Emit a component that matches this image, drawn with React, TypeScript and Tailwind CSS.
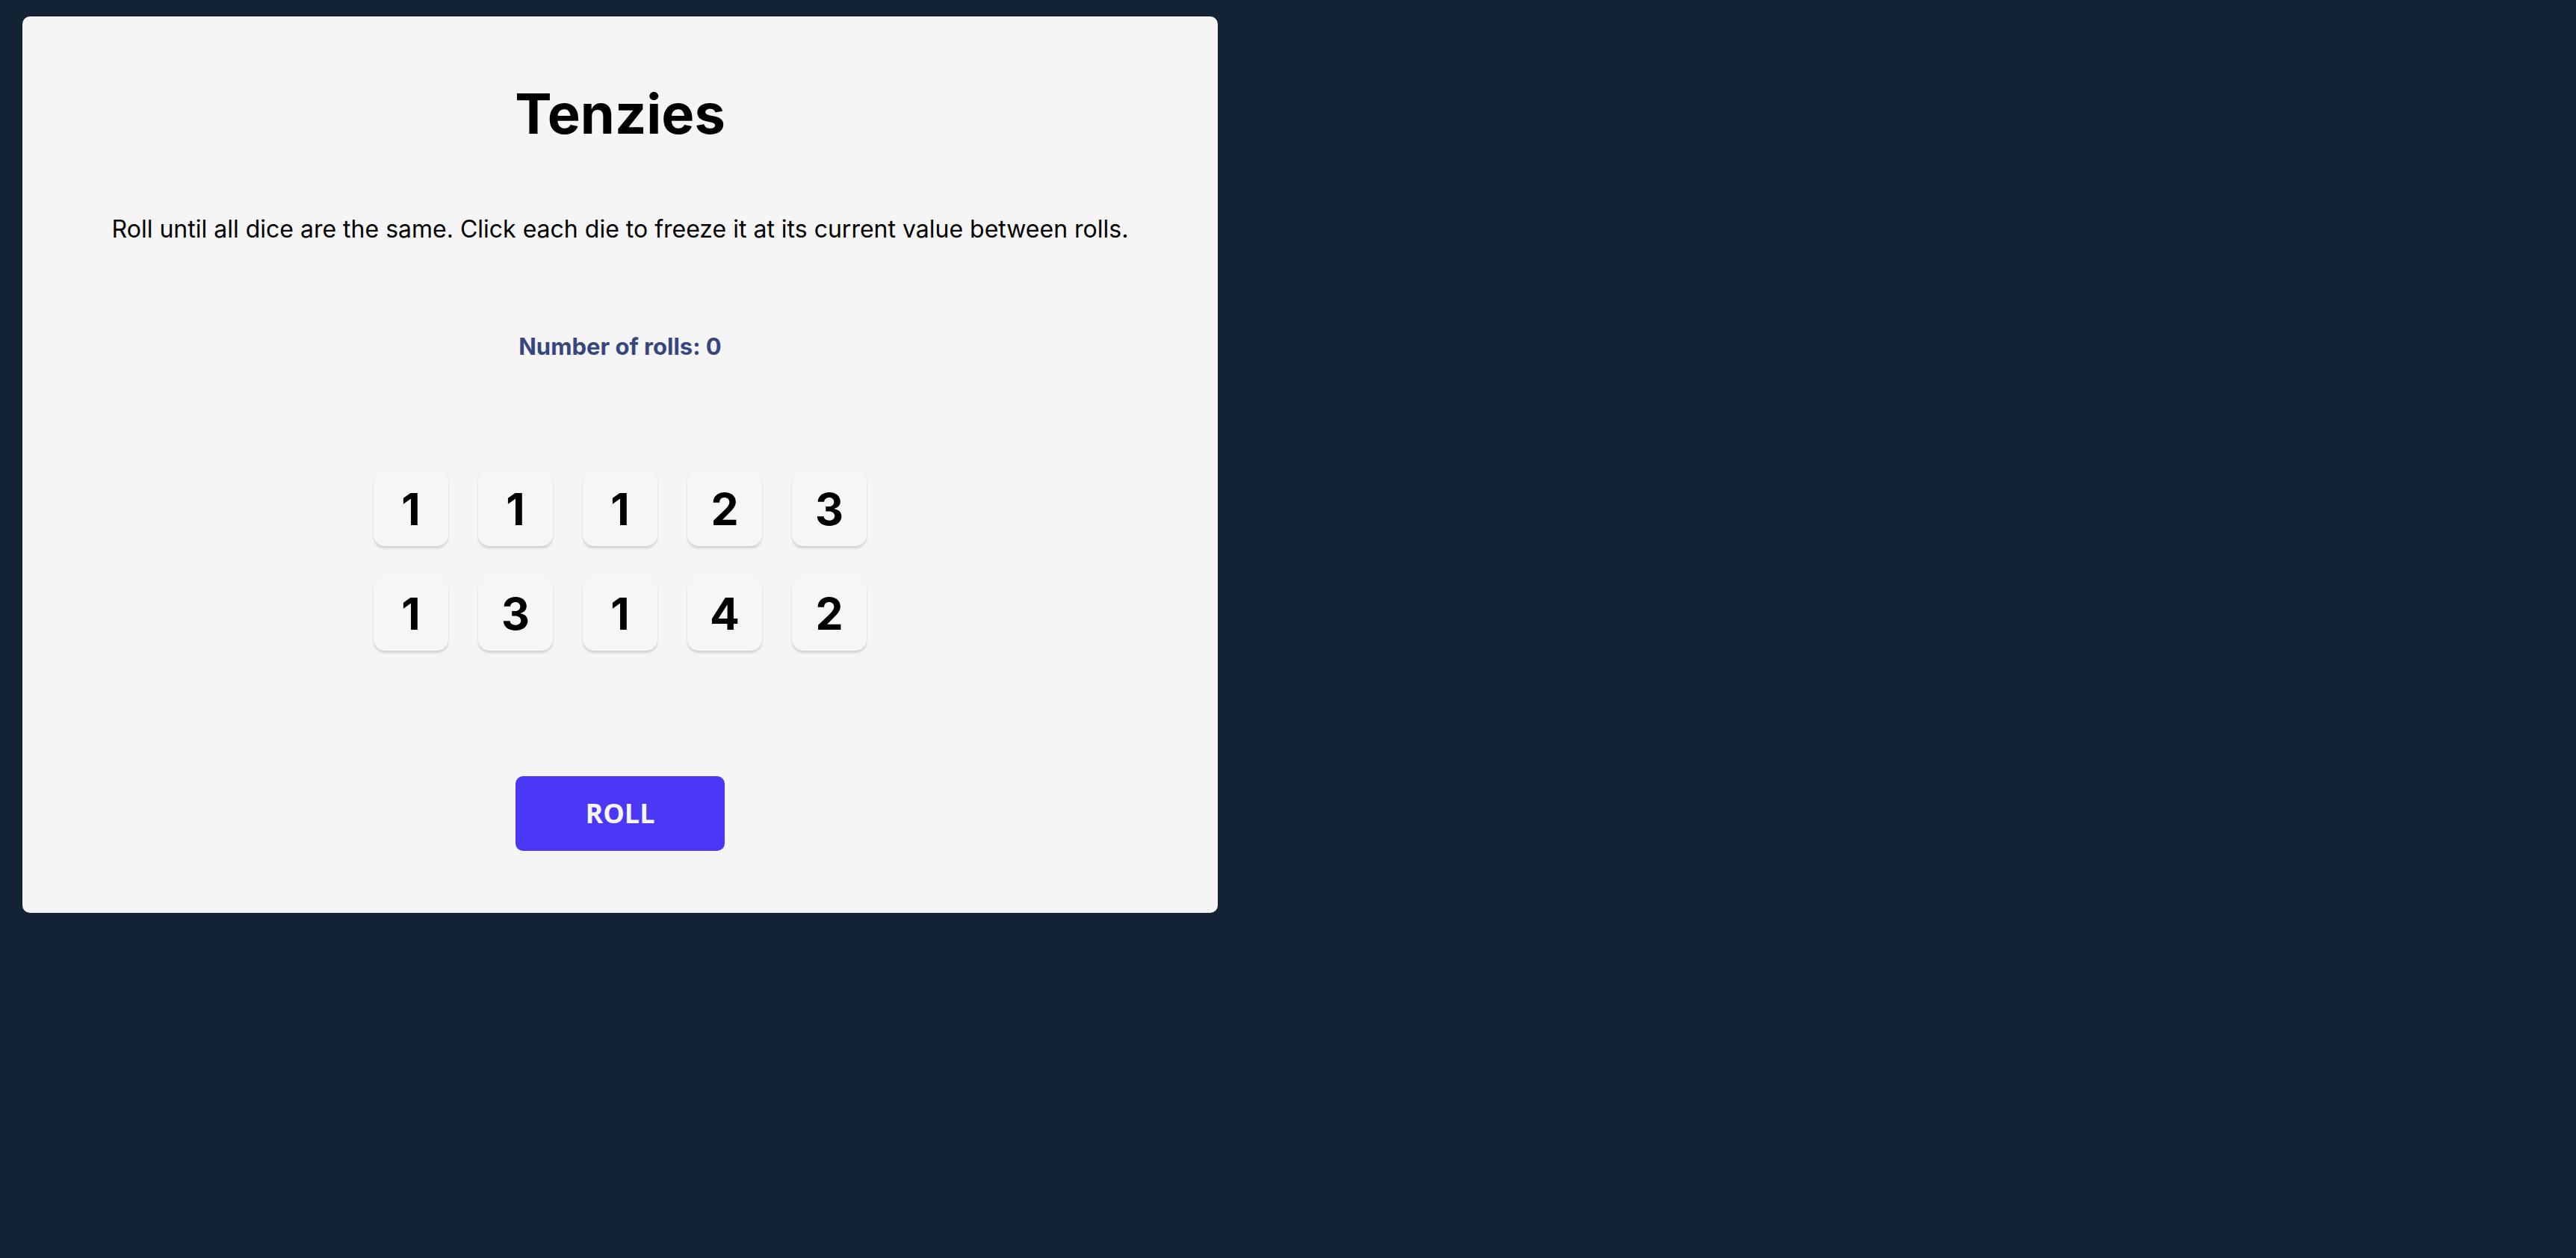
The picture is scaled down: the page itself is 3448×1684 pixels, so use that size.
import React from "react";

const dice = [1, 1, 1, 2, 3, 1, 3, 1, 4, 2];

export default function App() {
  return (
    <div className="min-h-[1684px] w-full bg-[#132235] pt-[22px] pl-[30px]" style={{ fontFamily: "Inter, 'Liberation Sans', sans-serif" }}>
      <main className="flex h-[1200px] w-[1600px] flex-col items-center rounded-[10px] bg-[#f5f5f5]">
        <h1 className="mt-[93px] text-[74px] font-bold leading-none text-black">Tenzies</h1>
        <p className="mt-[102px] text-[32px] leading-none text-black">
          Roll until all dice are the same. Click each die to freeze it at its current value between rolls.
        </p>
        <p className="mt-[125px] text-[31px] font-bold leading-none text-[#36467f]">Number of rolls: 0</p>
        <div className="mt-[152px] grid grid-cols-5 gap-[40px]">
          {dice.map((d, i) => (
            <button
              key={i}
              className="flex h-[100px] w-[100px] items-center justify-center rounded-[15px] bg-[#f6f6f6] text-[59px] font-bold leading-none text-black shadow-[0_3px_3px_rgba(0,0,0,0.15)]"
            >
              {d}
            </button>
          ))}
        </div>
        <button
          className="mt-[168px] flex h-[100px] w-[280px] items-center justify-center rounded-[10px] bg-[#4a38f6] text-[36px] font-bold leading-none text-[#f5f5f5]"
          style={{ fontFamily: "'Open Sans', 'Noto Sans', sans-serif" }}
        >
          ROLL
        </button>
      </main>
    </div>
  );
}
